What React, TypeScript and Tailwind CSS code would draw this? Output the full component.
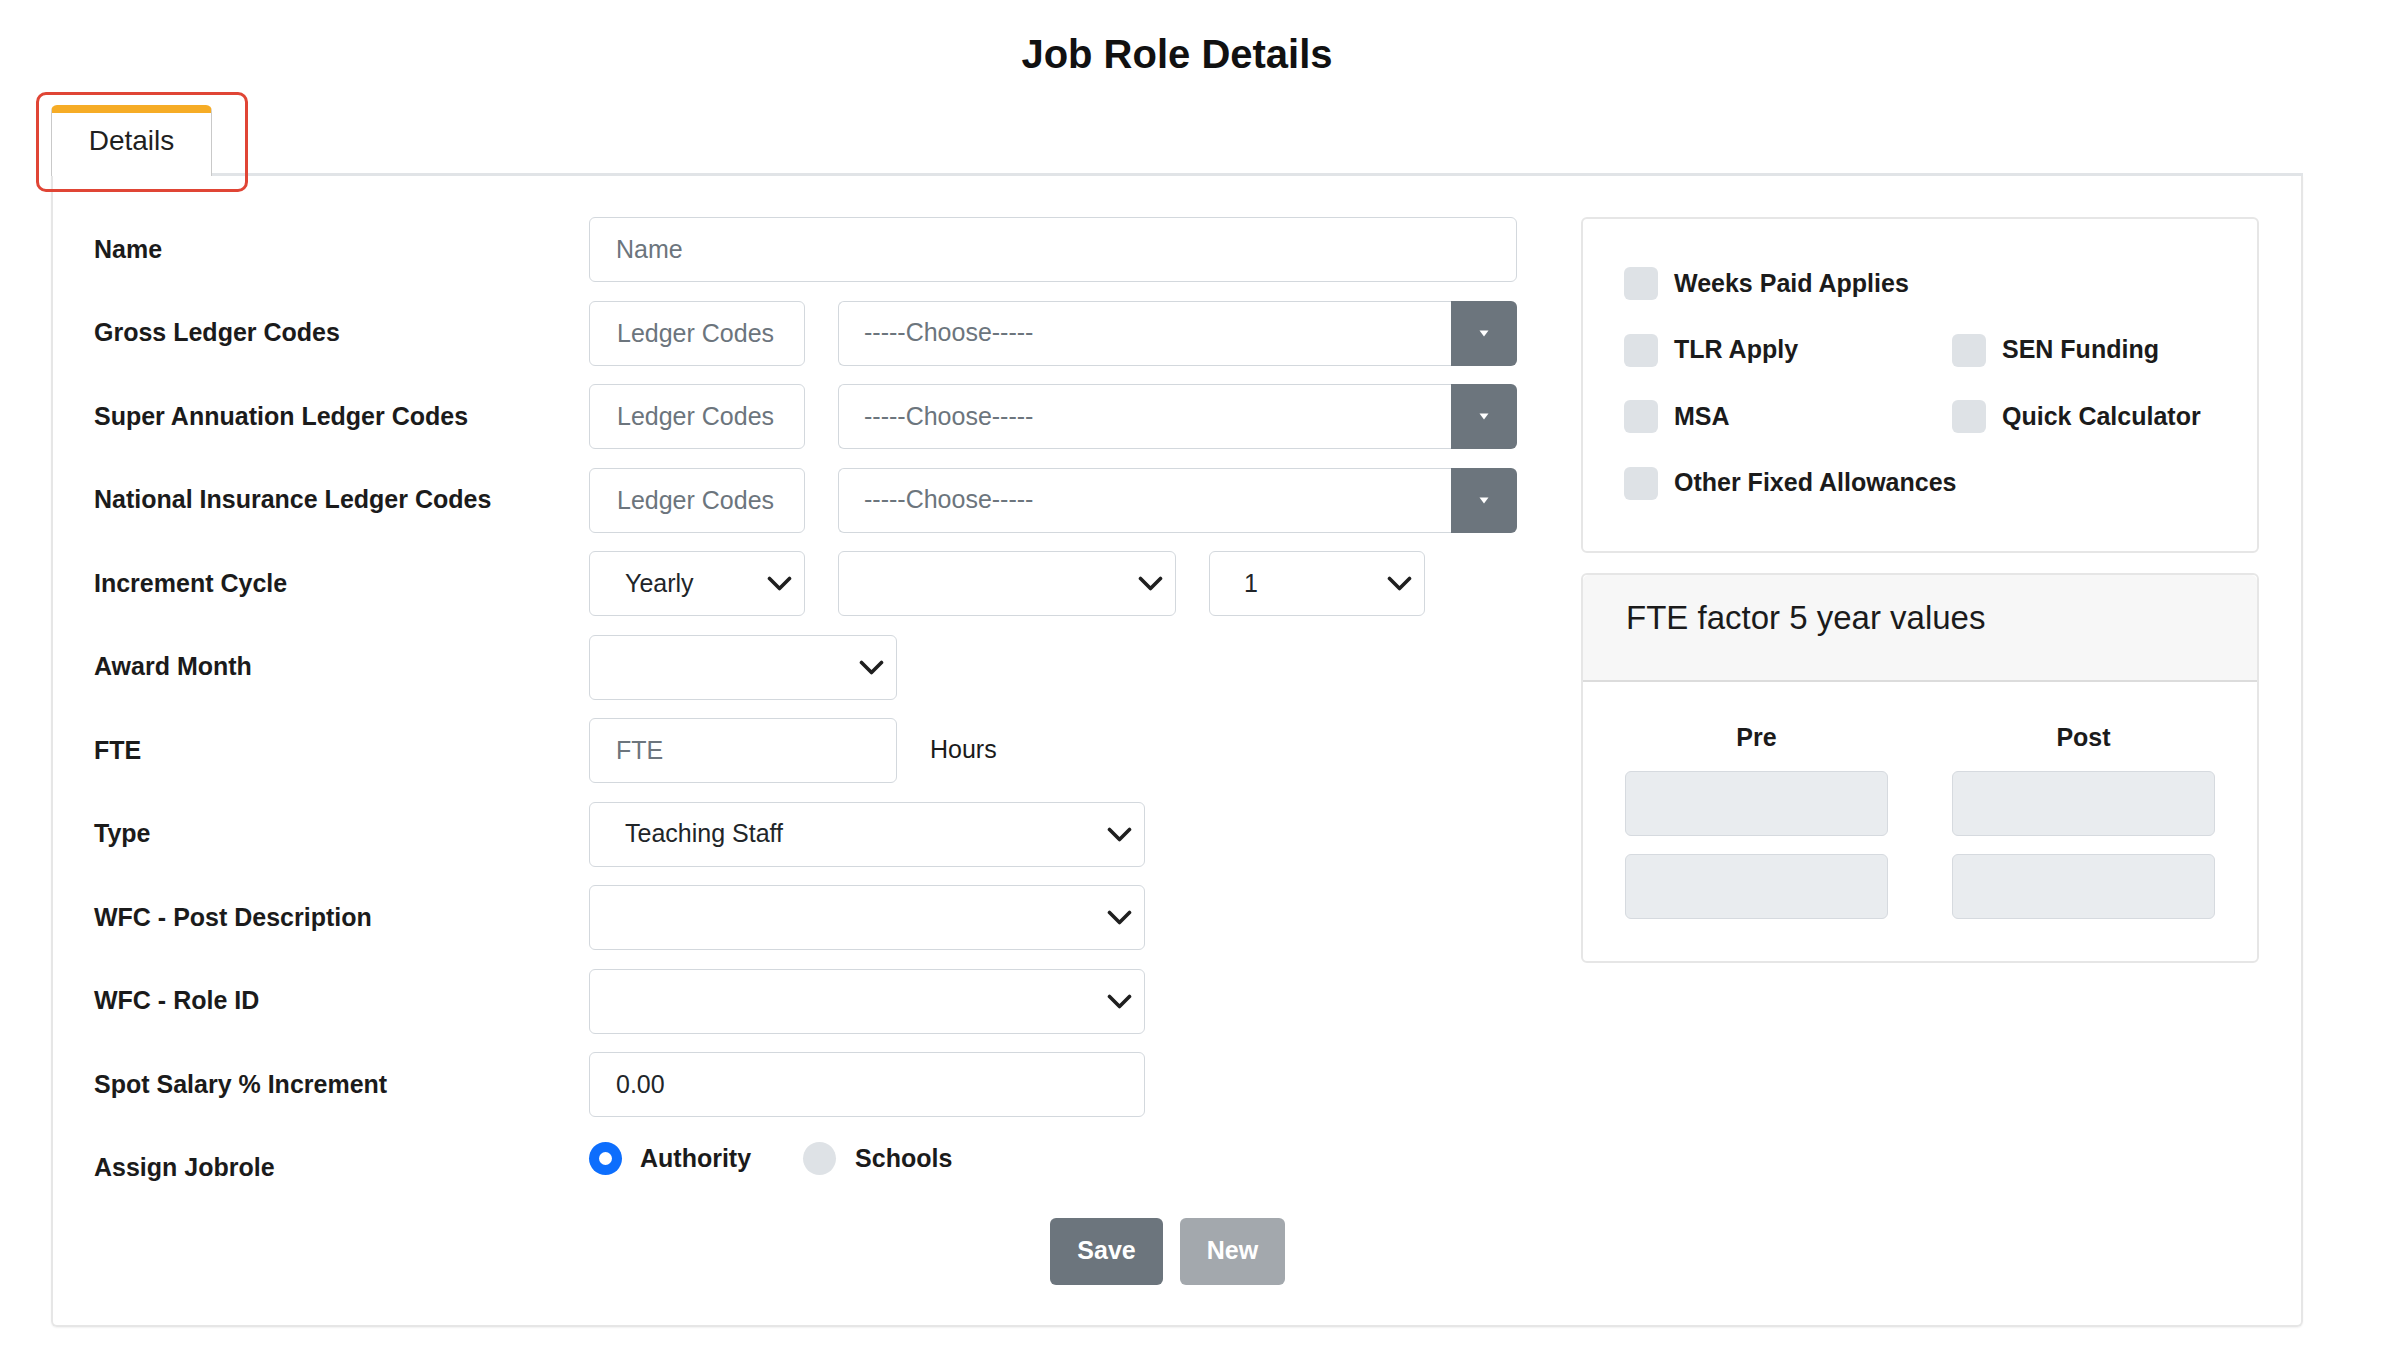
import React from 'react'

const inputCls =
  "h-[65px] rounded-[6px] border-[1.5px] border-[#d3d8dd] bg-white px-[26px] text-[25px] text-[#212529] outline-none placeholder:text-[#6c757d] font-['Liberation_Sans',Arial,sans-serif]"

function Chevron() {
  return (
    <svg width="25" height="15" viewBox="0 0 25 15" fill="none" stroke="#1f1f1f" strokeWidth="3.6" strokeLinecap="round" strokeLinejoin="round">
      <path d="M2.5 2.5 L12.5 12.5 L22.5 2.5" />
    </svg>
  )
}

function Select({ width, value, padLeft = 'pl-[35px]' }: { width: string; value?: string; padLeft?: string }) {
  return (
    <div className={`${width} flex h-[65px] items-center justify-between rounded-[6px] border-[1.5px] border-[#d3d8dd] bg-white ${padLeft} pr-[12px] text-[25px] text-[#212529]`}>
      <span>{value ?? ''}</span>
      <Chevron />
    </div>
  )
}

function ChooseSelect() {
  return (
    <div className="flex h-[65px] w-[679px]">
      <div className="flex flex-1 items-center rounded-l-[6px] border-[1.5px] border-r-0 border-[#d3d8dd] bg-white pl-[25px] text-[25px] text-[#6c757d]">
        -----Choose-----
      </div>
      <div className="flex w-[66px] items-center justify-center rounded-r-[6px] bg-[#6c757d]">
        <svg width="10" height="7" viewBox="0 0 10 7">
          <path d="M0.5 0.5 L9.5 0.5 L5 6.5 Z" fill="#ffffff" />
        </svg>
      </div>
    </div>
  )
}

function Row({ label, children }: { label: string; children?: React.ReactNode }) {
  return (
    <div className="flex h-[65px] items-center">
      <div className="w-[495px] text-[25px] font-bold text-[#1b1b1b]">{label}</div>
      <div className="flex flex-1 items-center">{children}</div>
    </div>
  )
}

function Check({ label }: { label: string }) {
  return (
    <div className="flex h-[33px] items-center gap-[16px] whitespace-nowrap">
      <div className="h-[33px] w-[34px] shrink-0 rounded-[6px] bg-[#dee2e6]" />
      <span className="text-[25px] font-bold text-[#1b1b1b]">{label}</span>
    </div>
  )
}

export default function App() {
  return (
    <div className="relative min-h-screen w-full bg-white pl-[51px] pr-[100px] font-['Liberation_Sans',Arial,sans-serif]">
      <h1 className="pt-[30px] text-center text-[40px] font-bold leading-[48px] text-[#111]">Job Role Details</h1>

      <div className="mt-[27px] flex items-end">
        <div className="flex h-[71px] w-[161px] items-center justify-center rounded-t-[6px] border-x-[1.5px] border-t-[8px] border-x-[#c9c9c9] border-t-[#f6ac26] bg-white pb-[8px] text-[28px] text-[#1f1f1f]">
          Details
        </div>
        <div className="flex-1 border-b-[3px] border-[#e1e4e7]" />
      </div>

      <div className="rounded-b-[6px] border-x-2 border-b-2 border-[#e6e6e6] pb-[40px] pl-[41px] pr-[42px] pt-[41px] shadow-[0_1px_2px_rgba(0,0,0,0.06)]">
        <div className="flex gap-[64px]">
          <div className="flex w-[1423px] flex-col gap-[18.5px]">
            <Row label="Name">
              <input className={`${inputCls} w-[928px]`} placeholder="Name" readOnly />
            </Row>
            {['Gross Ledger Codes', 'Super Annuation Ledger Codes', 'National Insurance Ledger Codes'].map((l) => (
              <Row key={l} label={l}>
                <div className="flex gap-[33px]">
                  <input className={`${inputCls} w-[216px] pl-[27px]`} placeholder="Ledger Codes" readOnly />
                  <ChooseSelect />
                </div>
              </Row>
            ))}
            <Row label="Increment Cycle">
              <div className="flex gap-[33px]">
                <Select width="w-[216px]" value="Yearly" />
                <Select width="w-[338px]" />
                <Select width="w-[216px]" value="1" padLeft="pl-[34px]" />
              </div>
            </Row>
            <Row label="Award Month">
              <Select width="w-[308px]" />
            </Row>
            <Row label="FTE">
              <input className={`${inputCls} w-[308px]`} placeholder="FTE" readOnly />
              <span className="ml-[33px] -translate-y-[1px] text-[25px] text-[#1b1b1b]">Hours</span>
            </Row>
            <Row label="Type">
              <Select width="w-[556px]" value="Teaching Staff" />
            </Row>
            <Row label="WFC - Post Description">
              <Select width="w-[556px]" />
            </Row>
            <Row label="WFC - Role ID">
              <Select width="w-[556px]" />
            </Row>
            <Row label="Spot Salary % Increment">
              <input className={`${inputCls} w-[556px]`} defaultValue="0.00" readOnly />
            </Row>
            <div className="flex h-[65px] items-center">
              <div className="w-[495px] text-[25px] font-bold text-[#1b1b1b]">Assign Jobrole</div>
              <div className="flex items-center self-start pt-[4px]">
                <div className="flex h-[33px] w-[33px] items-center justify-center rounded-full bg-[#0d6efd]">
                  <div className="h-[13px] w-[13px] rounded-full bg-white" />
                </div>
                <span className="ml-[18px] text-[25px] font-bold text-[#1b1b1b]">Authority</span>
                <div className="ml-[52px] h-[33px] w-[33px] rounded-full bg-[#dee2e6]" />
                <span className="ml-[19px] text-[25px] font-bold text-[#1b1b1b]">Schools</span>
              </div>
            </div>
          </div>

          <div className="flex w-[678px] flex-col gap-[20px]">
            <div className="h-[336px] rounded-[6px] border-2 border-[#e6e6e6] px-[41px] pt-[48px]">
              <div className="grid grid-cols-[328px_1fr] gap-y-[33.5px]">
                <Check label="Weeks Paid Applies" />
                <div />
                <Check label="TLR Apply" />
                <Check label="SEN Funding" />
                <Check label="MSA" />
                <Check label="Quick Calculator" />
                <Check label="Other Fixed Allowances" />
              </div>
            </div>

            <div className="h-[390px] rounded-[6px] border-2 border-[#e6e6e6]">
              <div className="flex h-[107px] items-center rounded-t-[6px] border-b-2 border-[#dcdcdc] bg-[#f7f7f7] pl-[43px] pb-[20px] text-[33px] text-[#1b1b1b]">
                FTE factor 5 year values
              </div>
              <div className="grid grid-cols-2 gap-x-[64px] px-[42px] pt-[41px]">
                <div className="flex flex-col items-center">
                  <span className="text-[25px] font-bold leading-[29px] text-[#1b1b1b]">Pre</span>
                  <div className="mt-[19px] h-[65px] w-full rounded-[6px] border-[1.5px] border-[#d6dadf] bg-[#e9ecef]" />
                  <div className="mt-[18px] h-[65px] w-full rounded-[6px] border-[1.5px] border-[#d6dadf] bg-[#e9ecef]" />
                </div>
                <div className="flex flex-col items-center">
                  <span className="text-[25px] font-bold leading-[29px] text-[#1b1b1b]">Post</span>
                  <div className="mt-[19px] h-[65px] w-full rounded-[6px] border-[1.5px] border-[#d6dadf] bg-[#e9ecef]" />
                  <div className="mt-[18px] h-[65px] w-full rounded-[6px] border-[1.5px] border-[#d6dadf] bg-[#e9ecef]" />
                </div>
              </div>
            </div>
          </div>
        </div>

        <div className="mt-[17px] flex justify-center gap-[17px] pr-[18px]">
          <button className="h-[67px] w-[113px] rounded-[6px] bg-[#6c757d] text-[25px] font-bold text-white">Save</button>
          <button className="h-[67px] w-[105px] rounded-[6px] bg-[#a3a8ad] text-[25px] font-bold text-white">New</button>
        </div>
      </div>

      <div className="pointer-events-none absolute left-[36px] top-[92px] h-[100px] w-[212px] rounded-[10px] border-[3px] border-[#e04535]" />
    </div>
  )
}
